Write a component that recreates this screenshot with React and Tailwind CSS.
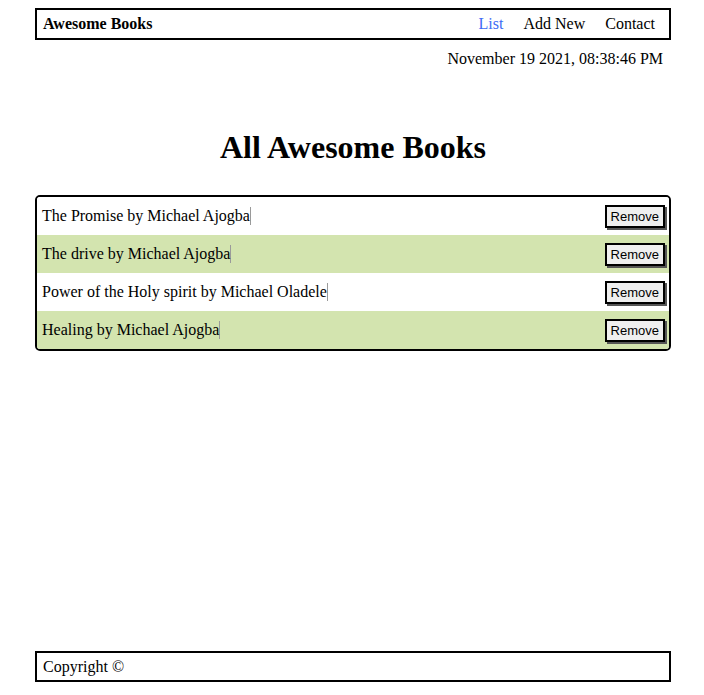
import React from "react";

const books = [
  "The Promise by Michael Ajogba",
  "The drive by Michael Ajogba",
  "Power of the Holy spirit by Michael Oladele",
  "Healing by Michael Ajogba",
];

export default function App() {
  return (
    <div
      className="min-h-[695px] flex flex-col bg-white text-black"
      style={{ fontFamily: '"Liberation Serif", "Times New Roman", serif' }}
    >
      <header className="w-[636px] ml-[35px] mt-[8px] h-[32px] border-2 border-black flex items-center justify-between pl-[6px] pr-[14px] text-[16px]">
        <span className="font-bold">Awesome Books</span>
        <nav className="flex gap-5">
          <span className="text-[#3d6cf5]">List</span>
          <span>Add New</span>
          <span>Contact</span>
        </nav>
      </header>

      <main className="flex-1">
        <div className="w-[636px] ml-[35px] text-right pr-[8px] mt-[10px] text-[16px] leading-[18px]">
          November 19 2021, 08:38:46 PM
        </div>

        <h1 className="w-[636px] ml-[35px] text-center font-bold text-[32px] leading-[37px] mt-[61px]">
          All Awesome Books
        </h1>

        <ul className="w-[636px] ml-[35px] mt-[29px] border-2 border-black rounded-[5px] overflow-hidden">
          {books.map((b, i) => (
            <li
              key={i}
              className={`h-[38px] flex items-center justify-between pl-[5px] pr-[4px] text-[16px] ${
                i % 2 === 1 ? "bg-[#d3e4af]" : "bg-white"
              }`}
            >
              <span className="border-r border-[#9a9a9a] leading-[18px]">{b}</span>
              <button
                className="h-[23px] px-[4px] border-2 border-black bg-[#efefef] text-[13px] shadow-[2px_2px_0_#555] leading-none"
                style={{ fontFamily: '"Liberation Sans", Arial, sans-serif' }}
              >
                Remove
              </button>
            </li>
          ))}
        </ul>
      </main>

      <footer className="w-[636px] ml-[35px] mb-[13px] h-[31px] border-2 border-black flex items-center pl-[6px] text-[16px]">
        Copyright ©
      </footer>
    </div>
  );
}
